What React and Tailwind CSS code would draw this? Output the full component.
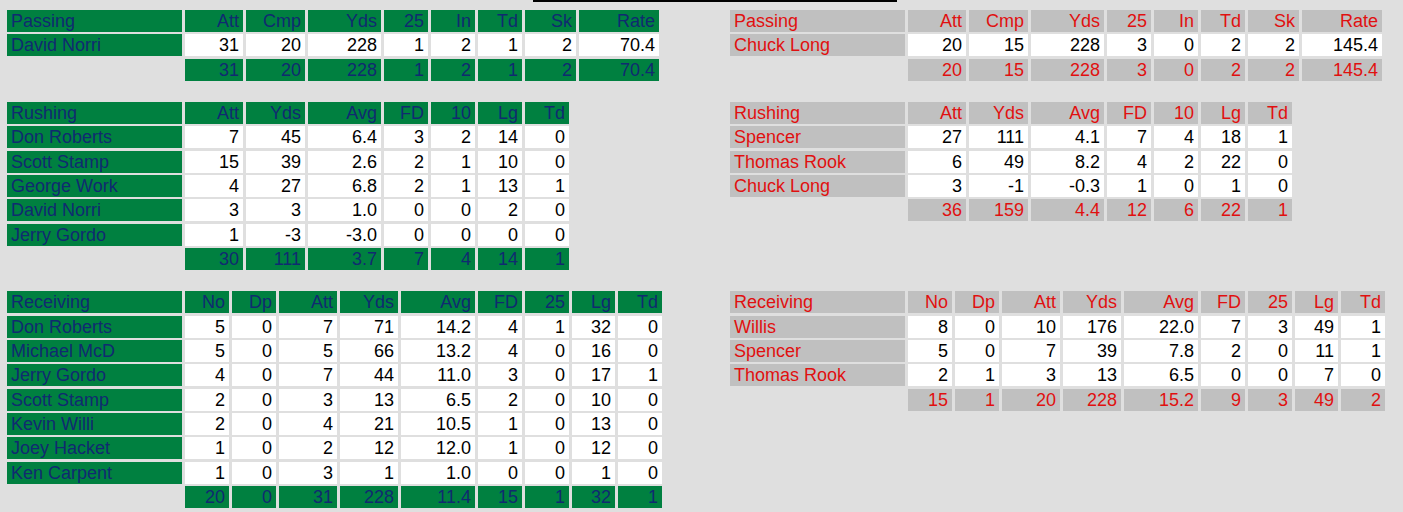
// Box score stat tables: home side green/navy, visitors silver/red.
const THEMES = {
  home: { head: 'bg-[#008040] text-[#102a70]', name: 'bg-[#008040] text-[#102a70]' },
  away: { head: 'bg-[#c0c0c0] text-[#e01010]', name: 'bg-[#c0c0c0] text-[#e01010]' },
}

const PASS_COLS = 'grid-cols-[175px_58px_59px_73px_44px_44px_44px_51px_80px]'
const RUSH_COLS = 'grid-cols-[175px_58px_59px_73px_44px_44px_44px_44px]'
const RECV_COLS = 'grid-cols-[175px_44px_44px_58px_58px_74px_44px_44px_43px_44px]'

const home = {
  passing: {
    head: ['Passing', 'Att', 'Cmp', 'Yds', '25', 'In', 'Td', 'Sk', 'Rate'],
    rows: [['David Norri', 31, 20, 228, 1, 2, 1, 2, '70.4']],
    total: [31, 20, 228, 1, 2, 1, 2, '70.4'],
  },
  rushing: {
    head: ['Rushing', 'Att', 'Yds', 'Avg', 'FD', '10', 'Lg', 'Td'],
    rows: [
      ['Don Roberts', 7, 45, '6.4', 3, 2, 14, 0],
      ['Scott Stamp', 15, 39, '2.6', 2, 1, 10, 0],
      ['George Work', 4, 27, '6.8', 2, 1, 13, 1],
      ['David Norri', 3, 3, '1.0', 0, 0, 2, 0],
      ['Jerry Gordo', 1, -3, '-3.0', 0, 0, 0, 0],
    ],
    total: [30, 111, '3.7', 7, 4, 14, 1],
  },
  receiving: {
    head: ['Receiving', 'No', 'Dp', 'Att', 'Yds', 'Avg', 'FD', '25', 'Lg', 'Td'],
    rows: [
      ['Don Roberts', 5, 0, 7, 71, '14.2', 4, 1, 32, 0],
      ['Michael McD', 5, 0, 5, 66, '13.2', 4, 0, 16, 0],
      ['Jerry Gordo', 4, 0, 7, 44, '11.0', 3, 0, 17, 1],
      ['Scott Stamp', 2, 0, 3, 13, '6.5', 2, 0, 10, 0],
      ['Kevin Willi', 2, 0, 4, 21, '10.5', 1, 0, 13, 0],
      ['Joey Hacket', 1, 0, 2, 12, '12.0', 1, 0, 12, 0],
      ['Ken Carpent', 1, 0, 3, 1, '1.0', 0, 0, 1, 0],
    ],
    total: [20, 0, 31, 228, '11.4', 15, 1, 32, 1],
  },
}

const away = {
  passing: {
    head: ['Passing', 'Att', 'Cmp', 'Yds', '25', 'In', 'Td', 'Sk', 'Rate'],
    rows: [['Chuck Long', 20, 15, 228, 3, 0, 2, 2, '145.4']],
    total: [20, 15, 228, 3, 0, 2, 2, '145.4'],
  },
  rushing: {
    head: ['Rushing', 'Att', 'Yds', 'Avg', 'FD', '10', 'Lg', 'Td'],
    rows: [
      ['Spencer', 27, 111, '4.1', 7, 4, 18, 1],
      ['Thomas Rook', 6, 49, '8.2', 4, 2, 22, 0],
      ['Chuck Long', 3, -1, '-0.3', 1, 0, 1, 0],
    ],
    total: [36, 159, '4.4', 12, 6, 22, 1],
  },
  receiving: {
    head: ['Receiving', 'No', 'Dp', 'Att', 'Yds', 'Avg', 'FD', '25', 'Lg', 'Td'],
    rows: [
      ['Willis', 8, 0, 10, 176, '22.0', 7, 3, 49, 1],
      ['Spencer', 5, 0, 7, 39, '7.8', 2, 0, 11, 1],
      ['Thomas Rook', 2, 1, 3, 13, '6.5', 0, 0, 7, 0],
    ],
    total: [15, 1, 20, 228, '15.2', 9, 3, 49, 2],
  },
}

function StatTable({ data, cols, theme }) {
  const t = THEMES[theme]
  const cell = 'h-[22px] leading-[22px] px-[4px] whitespace-nowrap overflow-hidden'
  return (
    <div className={`grid ${cols} gap-x-[3px] gap-y-[2.4px]`}>
      {data.head.map((h, i) => (
        <div key={'h' + i} className={`${cell} ${t.head} ${i ? 'text-right' : 'text-left'}`}>{h}</div>
      ))}
      {data.rows.map((r, ri) => r.map((v, i) => (
        <div key={ri + '-' + i}
          className={`${cell} ${i ? 'bg-white text-black text-right' : t.name + ' text-left'}`}>{v}</div>
      )))}
      <div className={cell} />
      {data.total.map((v, i) => (
        <div key={'t' + i} className={`${cell} ${t.head} text-right`}>{v}</div>
      ))}
    </div>
  )
}

// one band per stat group, home table on the left, visitors on the right
function Band({ kind, cols }) {
  return (
    <div className="flex items-start">
      <div className="w-[730px] pl-[7px] shrink-0">
        <StatTable data={home[kind]} cols={cols} theme="home" />
      </div>
      <StatTable data={away[kind]} cols={cols} theme="away" />
    </div>
  )
}

export default function App() {
  return (
    <div className="w-[1403px] h-[512px] overflow-hidden bg-[#dfdfdf] text-[18px] font-['Liberation_Sans',Arial,sans-serif]">
      <div className="ml-[533px] w-[364px] h-[2px] bg-black" />
      <div className="flex flex-col gap-[21px] mt-[8px]">
        <Band kind="passing" cols={PASS_COLS} />
        <Band kind="rushing" cols={RUSH_COLS} />
        <Band kind="receiving" cols={RECV_COLS} />
      </div>
    </div>
  )
}
